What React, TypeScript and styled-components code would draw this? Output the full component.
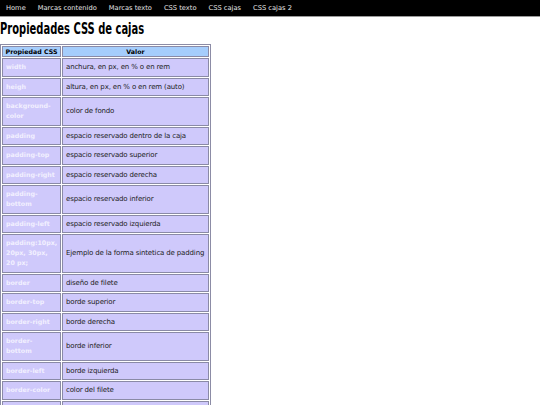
import React from "react";
import styled, { createGlobalStyle } from "styled-components";

const Global = createGlobalStyle`
  html, body { margin: 0; padding: 0; background: #fff; }
  body { font-family: Verdana, "DejaVu Sans", sans-serif; }
`;

const Nav = styled.nav`
  display: flex;
  align-items: center;
  height: 16px;
  background: #000;
  border-bottom: 1px solid #9a9a9a;
  padding-left: 6px;
  gap: 12px;
`;

const NavLink = styled.a`
  color: #e6e6e6;
  font-size: 6.7px;
  text-decoration: none;
  white-space: nowrap;
`;

const Title = styled.h1`
  margin: 3px 0 6px 0;
  height: 18px;
  font-family: Impact, "DejaVu Sans Condensed", sans-serif;
  font-weight: bold;
  font-size: 16.5px;
  line-height: 18px;
  color: #000;
  white-space: nowrap;
`;

const TitleText = styled.span`
  display: inline-block;
  transform: scaleX(0.67);
  transform-origin: left center;
`;

const Table = styled.table`
  border-collapse: separate;
  border-spacing: 1px;
  border: 1px solid #8c8ca6;
  margin: 0;
  width: 211px;
  table-layout: fixed;
`;

const HeadCell = styled.th<{ $w?: number }>`
  background: #a5cdfc;
  border: 1px solid #8a8aa6;
  color: #000;
  font-weight: bold;
  font-size: 6.3px;
  text-align: center;
  padding: 0 1px;
  line-height: 9px;
  width: ${(p) => (p.$w ? `${p.$w}px` : "auto")};
`;

const PropCell = styled.td`
  background: #cfc9fb;
  border: 1px solid #8a8aa6;
  color: #f2f0ff;
  font-weight: bold;
  font-size: 6.3px;
  padding: 3px 2px 3.5px 3px;
  line-height: 10px;
  vertical-align: middle;
`;

const ValCell = styled.td`
  background: #cfc9fb;
  border: 1px solid #8a8aa6;
  color: #222;
  font-size: 7px;
  letter-spacing: -0.15px;
  padding: 3px 1px 3.5px 3px;
  line-height: 10px;
  vertical-align: middle;
  white-space: nowrap;
`;

const rows: [string, string][] = [
  ["width", "anchura, en px, en % o en rem"],
  ["heigh", "altura, en px, en % o en rem (auto)"],
  ["background-color", "color de fondo"],
  ["padding", "espacio reservado dentro de la caja"],
  ["padding-top", "espacio reservado superior"],
  ["padding-right", "espacio reservado derecha"],
  ["padding-bottom", "espacio reservado inferior"],
  ["padding-left", "espacio reservado izquierda"],
  ["padding:10px, 20px, 30px, 20 px;", "Ejemplo de la forma sintetica de padding"],
  ["border", "diseño de filete"],
  ["border-top", "borde superior"],
  ["border-right", "borde derecha"],
  ["border-bottom", "borde inferior"],
  ["border-left", "borde izquierda"],
  ["border-color", "color del filete"],
  ["border-width", "grosor del filete"],
];

const links = ["Home", "Marcas contenido", "Marcas texto", "CSS texto", "CSS cajas", "CSS cajas 2"];

export default function App() {
  return (
    <>
      <Global />
      <Nav>
        {links.map((l) => (
          <NavLink key={l} href="#">
            {l}
          </NavLink>
        ))}
      </Nav>
      <Title>
        <TitleText>Propiedades CSS de cajas</TitleText>
      </Title>
      <Table>
        <thead>
          <tr>
            <HeadCell $w={55}>Propiedad CSS</HeadCell>
            <HeadCell>Valor</HeadCell>
          </tr>
        </thead>
        <tbody>
          {rows.map(([p, v]) => (
            <tr key={p}>
              <PropCell>{p}</PropCell>
              <ValCell>{v}</ValCell>
            </tr>
          ))}
        </tbody>
      </Table>
    </>
  );
}
